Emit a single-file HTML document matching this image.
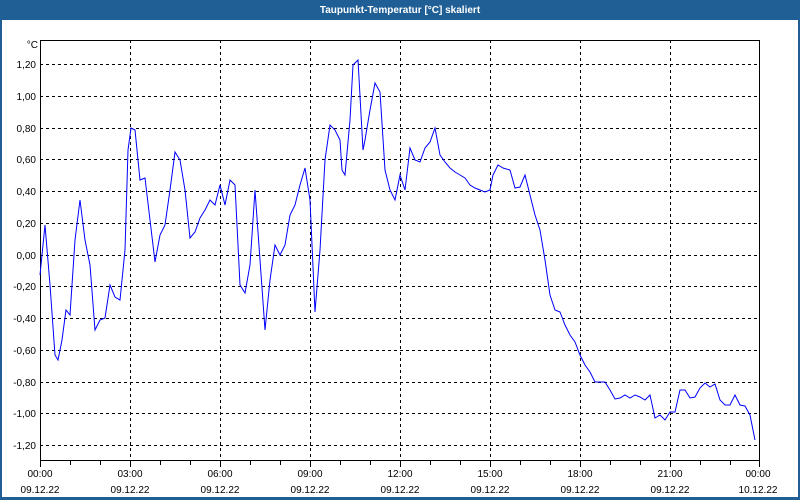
<!DOCTYPE html>
<html><head><style>
html,body{margin:0;padding:0;width:800px;height:500px;overflow:hidden;background:#fff}
</style></head><body>
<svg width="800" height="500" xmlns="http://www.w3.org/2000/svg" font-family="Liberation Sans, sans-serif" font-size="10">
<rect x="0" y="0" width="800" height="500" fill="#1f5f96"/>
<rect x="2" y="20" width="796" height="477" fill="#fff"/>
<text x="400" y="13" text-anchor="middle" fill="#fff" font-weight="bold" font-size="10">Taupunkt-Temperatur [°C] skaliert</text>
<g stroke="#000" stroke-width="1" stroke-dasharray="3,3" shape-rendering="crispEdges">
<line x1="40" y1="64.5" x2="760" y2="64.5"/><line x1="40" y1="96.5" x2="760" y2="96.5"/><line x1="40" y1="128.5" x2="760" y2="128.5"/><line x1="40" y1="159.5" x2="760" y2="159.5"/><line x1="40" y1="191.5" x2="760" y2="191.5"/><line x1="40" y1="223.5" x2="760" y2="223.5"/><line x1="40" y1="255.5" x2="760" y2="255.5"/><line x1="40" y1="286.5" x2="760" y2="286.5"/><line x1="40" y1="318.5" x2="760" y2="318.5"/><line x1="40" y1="350.5" x2="760" y2="350.5"/><line x1="40" y1="382.5" x2="760" y2="382.5"/><line x1="40" y1="413.5" x2="760" y2="413.5"/><line x1="40" y1="445.5" x2="760" y2="445.5"/>
<line x1="130.5" y1="40" x2="130.5" y2="461"/><line x1="220.5" y1="40" x2="220.5" y2="461"/><line x1="310.5" y1="40" x2="310.5" y2="461"/><line x1="400.5" y1="40" x2="400.5" y2="461"/><line x1="490.5" y1="40" x2="490.5" y2="461"/><line x1="580.5" y1="40" x2="580.5" y2="461"/><line x1="670.5" y1="40" x2="670.5" y2="461"/>
</g>
<g stroke="#000" stroke-width="1" shape-rendering="crispEdges">
<rect x="40.5" y="40.5" width="719" height="420" fill="none"/>
<path d="M40.5 461v6M70.5 461v4M100.5 461v4M130.5 461v6M160.5 461v4M190.5 461v4M220.5 461v6M250.5 461v4M280.5 461v4M310.5 461v6M340.5 461v4M370.5 461v4M400.5 461v6M430.5 461v4M460.5 461v4M490.5 461v6M520.5 461v4M550.5 461v4M580.5 461v6M610.5 461v4M640.5 461v4M670.5 461v6M700.5 461v4M730.5 461v4M759.5 461v6"/>
</g>
<g text-anchor="end" fill="#000">
<text x="38" y="48">°C</text>
<text x="36" y="68">1,20</text><text x="36" y="100">1,00</text><text x="36" y="132">0,80</text><text x="36" y="163">0,60</text><text x="36" y="195">0,40</text><text x="36" y="227">0,20</text><text x="36" y="259">0,00</text><text x="36" y="290">-0,20</text><text x="36" y="322">-0,40</text><text x="36" y="354">-0,60</text><text x="36" y="386">-0,80</text><text x="36" y="417">-1,00</text><text x="36" y="449">-1,20</text>
</g>
<g text-anchor="middle" fill="#000">
<text x="40" y="477">00:00</text><text x="40" y="493">09.12.22</text>
<text x="130" y="477">03:00</text><text x="130" y="493">09.12.22</text>
<text x="220" y="477">06:00</text><text x="220" y="493">09.12.22</text>
<text x="310" y="477">09:00</text><text x="310" y="493">09.12.22</text>
<text x="400" y="477">12:00</text><text x="400" y="493">09.12.22</text>
<text x="490" y="477">15:00</text><text x="490" y="493">09.12.22</text>
<text x="580" y="477">18:00</text><text x="580" y="493">09.12.22</text>
<text x="670" y="477">21:00</text><text x="670" y="493">09.12.22</text>
<text x="758" y="477">00:00</text><text x="758" y="493">10.12.22</text>
</g>
<polyline fill="none" stroke="#0000ff" stroke-width="1" points="40,275 45,225 50,285 55,355 58,360 62,340 66,310 70,315 75,240 80,200 85,240 90,265 95,330 100,320 105,318 110,285 115,297 120,300 125,250 128,150 131,128 135,130 140,180 145,178 150,220 155,262 160,235 165,225 170,190 175,152 180,160 185,190 190,238 195,232 200,218 205,210 210,200 215,205 220,185 225,205 230,180 235,185 240,285 245,293 250,265 255,190 260,260 265,330 270,280 275,245 280,255 285,245 290,215 295,205 300,185 305,168 310,200 315,312 320,250 325,160 330,125 335,130 340,140 342,170 345,175 350,120 353,65 358,60 363,150 365,140 370,110 375,83 380,92 385,170 390,190 395,200 400,175 405,190 410,148 415,160 420,162 425,148 430,142 435,128 440,155 445,162 450,168 455,172 460,175 465,178 470,185 475,188 480,190 485,192 490,190 493,175 498,165 503,168 510,170 515,188 520,187 525,175 530,195 535,215 540,230 545,260 550,295 555,310 560,312 565,325 570,335 575,342 580,355 585,365 590,372 595,382 600,382 605,382 610,390 615,399 620,398 625,395 630,398 635,395 640,397 645,400 650,395 655,418 660,415 665,420 670,412 675,412 680,390 685,390 690,398 695,397 700,388 705,383 710,387 715,384 720,400 725,405 730,405 735,395 740,405 745,406 750,415 755,440"/>
</svg>
</body></html>
